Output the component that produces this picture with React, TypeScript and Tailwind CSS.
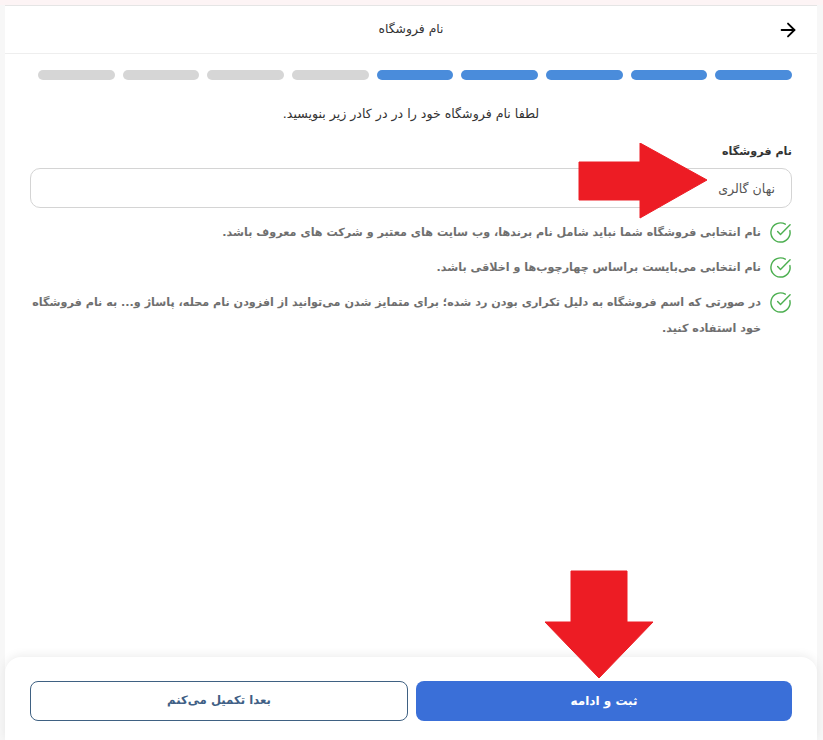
import { ArrowRight, CircleCheckBig } from 'lucide-react'

const steps = [true, true, true, true, true, false, false, false, false]

const rules = [
  'نام انتخابی فروشگاه شما نباید شامل نام برندها، وب سایت های معتبر و شرکت های معروف باشد.',
  'نام انتخابی می‌بایست براساس چهارچوب‌ها و اخلاقی باشد.',
  'در صورتی که اسم فروشگاه به دلیل تکراری بودن رد شده؛ برای متمایز شدن می‌توانید از افزودن نام محله، پاساژ و... به نام فروشگاه خود استفاده کنید.',
]

function RedArrows() {
  return (
    <>
      <svg className="absolute left-[578px] top-[143px] w-[130px] h-[76px]" viewBox="0 0 130 76">
        <path d="M1 19H62V0L129 37L62 75V57H1Z" fill="#ed1c24" stroke="#ed1c24" strokeWidth="1" strokeLinejoin="round" />
      </svg>
      <svg className="absolute left-[544px] top-[570px] w-[110px] h-[109px]" viewBox="0 0 110 109">
        <path d="M27 1H83V52H109L55 108L1 52H27Z" fill="#ed1c24" stroke="#ed1c24" strokeWidth="1" strokeLinejoin="round" />
      </svg>
    </>
  )
}

export default function App() {
  return (
    <div className="relative h-[740px] w-[823px] overflow-hidden bg-[#f7f7f7] pt-[5px] pl-[5px] pr-[6px] font-['DejaVu_Sans',sans-serif]" dir="rtl">
      <div className="absolute inset-x-0 top-0 h-[5px] bg-[#fdf4f5]" />
      <div className="flex h-[735px] flex-col border-t border-[#e5e5e5] bg-white">
        <header className="relative flex h-[48px] shrink-0 items-center justify-center border-b border-[#eeeeee]">
          <ArrowRight size={22} strokeWidth={2} className="absolute right-[18px] top-[13px] text-black" />
          <h1 className="text-[12.4px] font-normal text-[#333333]">نام فروشگاه</h1>
        </header>

        <div className="flex-1 pr-[25px] pl-[25px]">
          <div className="mt-[16px] flex gap-[8px] pl-[8px]">
            {steps.map((done, i) => (
              <div key={i} className={`h-[10px] flex-1 rounded-full ${done ? 'bg-[#4a8cdb]' : 'bg-[#d6d6d6]'}`} />
            ))}
          </div>

          <p className="mt-[25px] text-center text-[12.6px] leading-[18px] text-[#333333]">
            لطفا نام فروشگاه خود را در در کادر زیر بنویسید.
          </p>

          <label className="mt-[20px] block text-[11.2px] leading-[18px] font-bold text-[#333333]">نام فروشگاه</label>
          <input
            readOnly
            value="نهان گالری"
            className="mt-[7px] block h-[40px] w-full rounded-[10px] border border-[#d4d4d4] bg-white px-[16px] text-[12.6px] text-[#555555] outline-none"
          />

          <ul className="mt-[12px] flex flex-col gap-[9px]">
            {rules.map((rule) => (
              <li key={rule} className="flex items-start gap-[8px]">
                <CircleCheckBig size={23} strokeWidth={1.5} className="mt-[1px] shrink-0 text-[#4caf50]" />
                <span className="text-[11.2px] leading-[26px] font-bold text-[#6f6f6f]">{rule}</span>
              </li>
            ))}
          </ul>
        </div>

        <footer className="flex h-[83px] shrink-0 gap-[8px] rounded-t-[16px] bg-white px-[25px] pt-[24px] shadow-[0_-2px_10px_rgba(0,0,0,0.07)]">
          <button className="h-[40px] flex-1 rounded-[8px] bg-[#3a6fd8] text-[12px] font-bold text-white">ثبت و ادامه</button>
          <button className="h-[40px] flex-1 rounded-[8px] border border-[#3f6182] bg-white text-[11.7px] font-bold text-[#3f5f85]">بعدا تکمیل می‌کنم</button>
        </footer>
      </div>
      <RedArrows />
    </div>
  )
}
